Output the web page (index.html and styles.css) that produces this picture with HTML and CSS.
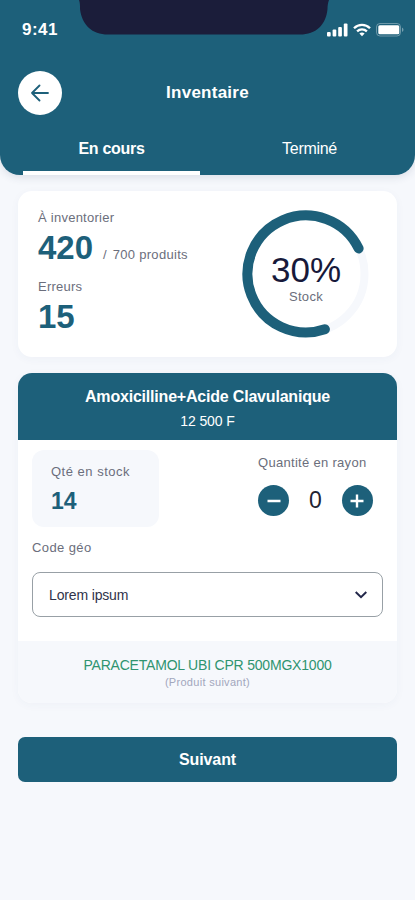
FILE: index.html
```html
<!DOCTYPE html>
<html lang="fr">
	<head>
		<title>Inventaire</title>
		<meta charset="UTF-8">
		<meta name="viewport" content="width=device-width, initial-scale=1">
		<link rel="stylesheet" href="styles.css">
	</head>
	<body>
		<header class="header">
			<svg class="notch" width="250" height="35" viewBox="0 0 250 35">
				<path d="M0 0C1 3 1 5 1 9C3 25 13 34.500 29 34.500H221C237 34.500 247 25 248.500 9C248.500 5 249 3 250 0Z" fill="#1b1d3a"/>
			</svg>
			<div class="status">
				<span class="time">9:41</span>
				<div class="status-icons">
					<svg width="21" height="14" viewBox="0 0 21 14" fill="#fff">
						<rect x="0" y="9" width="3.700" height="4.500" rx="1"/>
						<rect x="5.600" y="6.500" width="3.700" height="7" rx="1"/>
						<rect x="11.200" y="4" width="3.700" height="9.500" rx="1"/>
						<rect x="16.800" y="0.500" width="3.700" height="13" rx="1"/>
					</svg>
					<svg width="18" height="14" viewBox="0 0 18 14" fill="none" stroke="#fff" stroke-width="2.300">
						<path d="M1 5.200C5.500 0.700 12.500 0.700 17 5.200"/>
						<path d="M4.100 8.400C6.900 5.700 11.100 5.700 13.900 8.400"/>
						<path d="M6.400 10.500C7.900 9.200 10.100 9.200 11.600 10.500L9 13.200Z" fill="#fff" stroke="none"/>
					</svg>
					<svg width="28" height="14" viewBox="0 0 28 14">
						<rect x="0.500" y="0.500" width="24" height="12.500" rx="3.500" fill="none" stroke="#fff" stroke-opacity="0.350"/>
						<rect x="2.300" y="2.300" width="21" height="9" rx="1.500" fill="#fff"/>
						<path d="M26 4.600C28 5.600 28 8 26 9Z" fill="#fff" fill-opacity="0.400"/>
					</svg>
				</div>
			</div>
			<div class="title-bar">
				<button class="back" aria-label="Retour">
					<svg width="18" height="18" viewBox="0 0 18 18" fill="none" stroke="#1d607a" stroke-width="1.800" stroke-linecap="round" stroke-linejoin="round">
						<path d="M17 9H1M8.500 1.500L1 9L8.500 16.500"/>
					</svg>
				</button>
				<h1>Inventaire</h1>
			</div>
			<nav class="tabs">
				<a class="tab active">En cours</a>
				<a class="tab">Terminé</a>
			</nav>
		</header>

		<main>
			<section class="card summary">
				<div class="stats">
					<div class="label">À inventorier</div>
					<div class="big"><b>420</b><span class="slash">/</span><span class="total">700 produits</span></div>
					<div class="label errors">Erreurs</div>
					<div class="big"><b>15</b></div>
				</div>
				<div class="ring">
					<svg width="128" height="128" viewBox="-64 -64 128 128" fill="none" stroke-linecap="round">
						<circle r="58.500" stroke="#f6f8fc" stroke-width="8"/>
						<path d="M18.900 55.300A58.500 58.500 0 1 1 52.600 -25.600" stroke="#1d607a" stroke-width="10"/>
					</svg>
					<div class="ring-text">
						<div class="percent">30%</div>
						<div class="stock">Stock</div>
					</div>
				</div>
			</section>

			<section class="card product">
				<div class="product-head">
					<h2>Amoxicilline+Acide Clavulanique</h2>
					<div class="price">12 500 F</div>
				</div>
				<div class="product-body">
					<div class="quantities">
						<div class="in-stock">
							<div class="in-stock-label">Qté en stock</div>
							<b>14</b>
						</div>
						<div class="on-shelf">
							<div class="on-shelf-label">Quantité en rayon</div>
							<div class="counter">
								<button class="round" aria-label="Moins">
									<svg width="16" height="16" viewBox="0 0 16 16"><path d="M1.500 8H14.500" stroke="#fff" stroke-width="2.400"/></svg>
								</button>
								<span class="count">0</span>
								<button class="round" aria-label="Plus">
									<svg width="16" height="16" viewBox="0 0 16 16"><path d="M1.500 8H14.500M8 1.500V14.500" stroke="#fff" stroke-width="2.400"/></svg>
								</button>
							</div>
						</div>
					</div>
					<div class="geo-label">Code géo</div>
					<div class="select">
						<span>Lorem ipsum</span>
						<svg width="12" height="8" viewBox="0 0 12 8" fill="none" stroke="#23284a" stroke-width="2">
							<path d="M0.700 1L6 6.200L11.300 1"/>
						</svg>
					</div>
				</div>
				<div class="next-product">
					<div class="next-name">PARACETAMOL UBI CPR 500MGX1000</div>
					<div class="next-hint">(Produit suivant)</div>
				</div>
			</section>

			<button class="submit">Suivant</button>
		</main>
	</body>
</html>
```
FILE: styles.css
```css
* {
	box-sizing: border-box;
	margin: 0;
	padding: 0;
}

body {
	min-height: 900px;
	background: #f6f8fc;
	font-family: "Liberation Sans", Arial, sans-serif;
	color: #6b6e7c;
}

button {
	border: none;
	font-family: inherit;
}

svg { display: block; }

.header {
	position: relative;
	height: 175px;
	background: #1d607a;
	border-radius: 0 0 20px 20px;
	box-shadow: 0 2px 8px rgba(40, 60, 90, 0.14);
	color: #fff;
}

.notch {
	position: absolute;
	top: 0;
	left: 79px;
}

.status {
	display: flex;
	justify-content: space-between;
	align-items: center;
	height: 59px;
	padding: 0 11px 0 22px;
}

.time {
	font-size: 17px;
	font-weight: bold;
	letter-spacing: 0.5px;
}

.status-icons {
	display: flex;
	gap: 5px;
}

.title-bar {
	display: grid;
	grid-template-columns: 44px 1fr 44px;
	align-items: center;
	height: 68px;
	padding: 0 18px;
}

.back {
	display: flex;
	align-items: center;
	justify-content: center;
	width: 44px;
	height: 44px;
	border-radius: 50%;
	background: #fff;
}

h1 {
	text-align: center;
	font-size: 17px;
	letter-spacing: 0.25px;
}

.tabs {
	display: flex;
	height: 48px;
	padding: 0 0 0 23px;
}

.tab {
	flex: 1;
	padding: 13px 0 0 4px;
	text-align: center;
	font-size: 16px;
	line-height: 18px;
	letter-spacing: -0.3px;
}

.tab.active {
	flex: 0 0 177px;
	padding-left: 0;
	border-bottom: 4px solid #fff;
	border-radius: 4px 4px 0 0;
	font-weight: bold;
}

main { padding: 16px 18px 0 18px; }

.card {
	border-radius: 14px;
	background: #fff;
	box-shadow: 0 2px 10px rgba(60, 80, 120, 0.04);
}

.summary {
	display: flex;
	justify-content: space-between;
	height: 166px;
	padding: 19px 27px 0 20px;
}

.label {
	font-size: 13px;
	line-height: 15px;
	letter-spacing: 0.25px;
}

.errors { margin-top: 8px; }

.big {
	display: flex;
	align-items: baseline;
	height: 46px;
	line-height: 46px;
}

.big b {
	font-size: 33px;
	color: #1d607a;
}

.slash {
	margin-left: 10px;
	font-size: 13px;
}

.total {
	margin-left: 6px;
	font-size: 13px;
	letter-spacing: 0.3px;
}

.ring {
	position: relative;
	width: 128px;
	height: 128px;
}

.ring-text {
	position: absolute;
	top: 0;
	left: 0;
	width: 100%;
	padding-top: 40px;
	text-align: center;
}

.percent {
	font-size: 35px;
	line-height: 40px;
	color: #17193a;
}

.stock {
	font-size: 13px;
	line-height: 14px;
	letter-spacing: 0.3px;
}

.product {
	height: 330px;
	margin-top: 16px;
	overflow: hidden;
}

.product-head {
	height: 67px;
	padding-top: 14px;
	background: #1d607a;
	color: #fff;
	text-align: center;
}

h2 {
	font-size: 16px;
	line-height: 20px;
	letter-spacing: -0.2px;
}

.price {
	margin-top: 5px;
	font-size: 14px;
	line-height: 18px;
	letter-spacing: -0.1px;
}

.product-body {
	height: 201px;
	padding: 10px 14px 0 14px;
}

.quantities {
	display: flex;
	justify-content: space-between;
	height: 77px;
}

.in-stock {
	width: 127px;
	height: 77px;
	padding: 13px 19px;
	border-radius: 12px;
	background: #f6f8fc;
}

.in-stock-label {
	font-size: 13px;
	line-height: 18px;
	letter-spacing: 0.5px;
}

.in-stock b {
	display: block;
	margin-top: 6px;
	font-size: 23px;
	line-height: 28px;
	color: #1d607a;
}

.on-shelf {
	width: 125px;
	padding-top: 4px;
}

.on-shelf-label {
	font-size: 13px;
	line-height: 18px;
	letter-spacing: 0.3px;
	white-space: nowrap;
}

.counter {
	display: flex;
	align-items: center;
	justify-content: space-between;
	width: 115px;
	margin-top: 13px;
}

.round {
	display: flex;
	align-items: center;
	justify-content: center;
	width: 31px;
	height: 31px;
	border-radius: 50%;
	background: #1d607a;
}

.count {
	font-size: 23px;
	color: #222433;
}

.geo-label {
	margin-top: 12px;
	font-size: 13px;
	line-height: 18px;
	letter-spacing: 0.4px;
}

.select {
	display: flex;
	align-items: center;
	justify-content: space-between;
	height: 45px;
	margin-top: 15px;
	padding: 0 15px 0 16px;
	border: 1px solid #98a0a6;
	border-radius: 8px;
	font-size: 14px;
	letter-spacing: -0.15px;
	color: #30334a;
}

.next-product {
	height: 62px;
	padding-top: 16px;
	background: #f6f8fc;
	text-align: center;
}

.next-name {
	font-size: 14px;
	line-height: 17px;
	letter-spacing: -0.2px;
	color: #2f9470;
}

.next-hint {
	font-size: 11px;
	line-height: 16px;
	letter-spacing: 0.3px;
	color: #a2a7bc;
}

.submit {
	display: block;
	width: 100%;
	height: 45px;
	margin-top: 34px;
	border-radius: 7px;
	background: #1d607a;
	color: #fff;
	font-size: 16px;
	font-weight: bold;
	letter-spacing: -0.1px;
}
```
